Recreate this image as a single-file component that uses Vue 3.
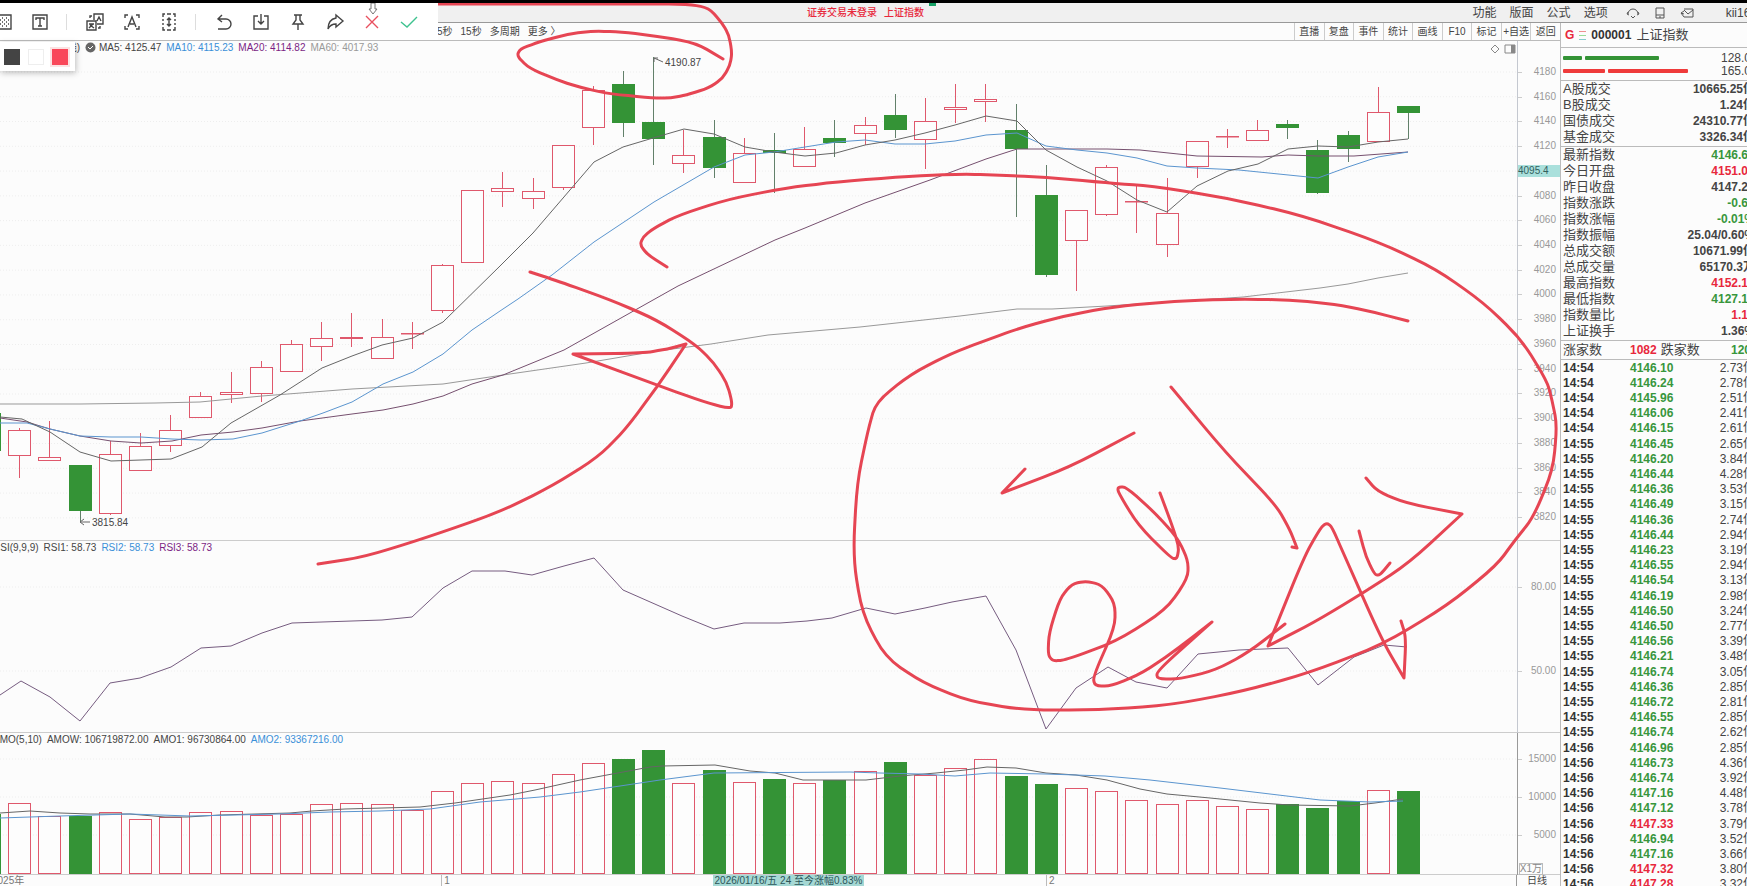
<template>
  <div class="screen">
    <header class="titleBar">
      <p class="notice"><span>证券交易未登录</span><span>上证指数</span><i class="noticeDot"></i></p>
      <nav class="menu">
        <button v-for="item in menu" :key="item">{{ item }}</button>
        <div class="menuIcons">
          <button aria-label="客服">
            <svg width="14" height="14" viewBox="0 0 14 14">
              <path d="M2 8 A5 5 0 1 1 12 8 M2 6 L1 8 L3 9 M12 6 L13 8 L11 9 M5 10 L7 12 L9 10" />
            </svg>
          </button>
          <button aria-label="手机版">
            <svg width="14" height="14" viewBox="0 0 14 14">
              <path d="M3 2 H11 V12 H3 Z M3 9 H11 M6 11 H8" />
            </svg>
          </button>
          <button aria-label="消息">
            <svg width="14" height="14" viewBox="0 0 14 14">
              <path d="M4 3 H13 V11 H4 L1 7 M4 4 L8 8 L13 4 M4 8 L1 7 L4 5" />
            </svg>
          </button>
        </div>
        <span class="user">kii163</span>
      </nav>
    </header>

    <div class="body">
      <main class="chart">
        <div class="periodBar">
          <div class="periods">
            <button v-for="item in periods" :key="item">{{ item }}</button>
          </div>
          <div class="actions">
            <button v-for="item in actions" :key="item">{{ item }}</button>
          </div>
        </div>

        <section class="panel pricePanel">
          <div class="plot">
            <p class="legend">
              <span class="legendHead">日线)</span>
              <svg class="check" width="11" height="11" viewBox="0 0 11 11">
                <circle cx="5.5" cy="5.5" r="5" fill="#666" />
                <path d="M3 5 L5 7 L8 4" fill="none" stroke="#fff" />
              </svg>
              <span>MA5: 4125.47</span>
              <span class="blue">MA10: 4115.23</span>
              <span class="purple">MA20: 4114.82</span>
              <span class="grey">MA60: 4017.93</span>
            </p>
            <svg class="corner" width="26" height="12" viewBox="0 0 26 12">
              <path d="M5 2 L9 6 L5 10 L1 6 Z M15 2 H25 V10 H15 Z" fill="none" stroke="#888" />
              <path d="M21 2 H25 V10 H21 Z" fill="#888" />
            </svg>
            <svg class="canvas" viewBox="0 41 1517 500" preserveAspectRatio="none">
              <line v-for="n in 19" :key="n" class="gridLine" x1="0" x2="1517" :y1="gridY(n)" :y2="gridY(n)" />
              <g v-for="(c, i) in candles" :key="i" :class="c[4] ? 'down' : 'up'">
                <line :x1="barX(i)" :x2="barX(i)" :y1="c[0]" :y2="c[1]" />
                <line :x1="barX(i)" :x2="barX(i)" :y1="c[2]" :y2="c[3]" />
                <rect :x="barX(i) - 11" :y="c[1] + 0.5" width="22" :height="Math.max(c[2] - c[1], 0.5)" />
              </g>
              <polyline class="line greyLine" :points="ma60" />
              <polyline class="line purpleLine" :points="ma20" />
              <polyline class="line blueLine" :points="ma10" />
              <polyline class="line darkLine" :points="ma5" />
              <path class="line darkLine" d="M654 62 V58 H658 M654 58 L663 62 M90 522 H80 M84 519 L80 522 L84 525" />
              <text x="665" y="66">4190.87</text>
              <text x="92" y="526">3815.84</text>
            </svg>
          </div>
          <ol class="axis priceAxis">
            <li v-for="p in prices" :key="p" :class="{ current: p === '4095.4' }">{{ p }}</li>
          </ol>
        </section>

        <section class="panel">
          <div class="plot">
            <p class="legend cutLeft">
              <span>RSI(9,9,9)</span>
              <span>RSI1: 58.73</span>
              <span class="blue">RSI2: 58.73</span>
              <span class="purple">RSI3: 58.73</span>
            </p>
            <svg class="canvas" viewBox="0 541 1517 192" preserveAspectRatio="none">
              <line class="gridLine" x1="0" x2="1517" y1="587" y2="587" />
              <line class="gridLine" x1="0" x2="1517" y1="671" y2="671" />
              <polyline class="line rsiLine" :points="rsi" />
            </svg>
          </div>
          <ol class="axis rsiAxis">
            <li>80.00</li>
            <li>50.00</li>
          </ol>
        </section>

        <section class="panel">
          <div class="plot">
            <p class="legend cutLeft">
              <span>AMO(5,10)</span>
              <span>AMOW: 106719872.00</span>
              <span>AMO1: 96730864.00</span>
              <span class="blue">AMO2: 93367216.00</span>
            </p>
            <svg class="canvas" viewBox="0 733 1517 142" preserveAspectRatio="none">
              <line v-for="y in [759, 797, 835]" :key="y" class="gridLine" x1="0" x2="1517" :y1="y" :y2="y" />
              <g v-for="(y, i) in amounts" :key="i" :class="candles[i][4] ? 'down' : 'up'">
                <rect :x="barX(i) - 11" :y="y + 0.5" width="22" :height="873 - y" />
              </g>
              <polyline class="line darkLine" :points="amo1" />
              <polyline class="line blueLine" :points="amo2" />
            </svg>
          </div>
          <ol class="axis amoAxis">
            <li>15000</li>
            <li>10000</li>
            <li>5000</li>
          </ol>
          <span class="unit">X1万</span>
        </section>

        <footer class="dates">
          <div class="dateTrack">
            <span class="year">2025年</span>
            <span v-for="m in months" :key="m.label" class="month" :style="{ left: m.left }">{{ m.label }}</span>
            <span class="dateTag">2026/01/16/五 24 至今涨幅0.83%</span>
          </div>
          <span class="cycle">日线</span>
        </footer>
      </main>

      <aside class="quote">
        <h1 class="stock">
          <b class="mark">G</b>
          <i class="stack"></i>
          <b>000001</b>
          <span>上证指数</span>
        </h1>
        <div class="strength">
          <div class="strengthRow sell"><i class="short"></i><i class="long"></i><span>128.0</span></div>
          <div class="strengthRow buy"><i class="short"></i><i class="long"></i><span>165.0</span></div>
        </div>
        <table v-for="(group, g) in quotes" :key="g" class="quoteTable">
          <tbody>
            <tr v-for="row in group" :key="row[0]">
              <th scope="row">{{ row[0] }}</th>
              <td :class="[row[2], { cut: row[3] }]">{{ row[1] }}</td>
            </tr>
          </tbody>
        </table>
        <p class="counts">
          <span>涨家数</span><b class="red">1082</b><span>跌家数</span><b class="green last">120</b>
        </p>
        <table class="ticks">
          <tbody>
            <tr v-for="(t, i) in ticks" :key="i">
              <td>{{ t[0] }}</td>
              <td :class="t[3] ? 'red' : 'green'">{{ t[1] }}</td>
              <td class="amount">{{ t[2] }}亿</td>
            </tr>
          </tbody>
        </table>
      </aside>
    </div>

    <svg class="ink" viewBox="0 0 1747 886" preserveAspectRatio="none">
      <path v-for="(s, i) in strokes" :key="i" :d="smooth(s)" />
    </svg>

    <div class="snipBar">
      <template v-for="(tool, i) in tools" :key="i">
        <i v-if="tool.sep" class="sep"></i>
        <button v-else :aria-label="tool.name" :class="tool.color">
          <svg width="20" height="20" viewBox="0 0 20 20">
            <path :d="tool.d" />
          </svg>
        </button>
      </template>
    </div>
    <div class="swatches">
      <button class="dark" aria-label="黑色"></button>
      <button class="white" aria-label="白色"></button>
      <button class="picked" aria-label="红色"></button>
    </div>
    <svg class="pointer" width="10" height="13" viewBox="0 0 10 13">
      <path d="M3 1 H7 V7 H9 L5 12 L1 7 H3 Z" />
    </svg>
  </div>
</template>

<script setup>
const menu = ["功能", "版面", "公式", "选项"];
const periods = ["5秒", "15秒", "多周期", "更多 〉"];
const actions = ["直播", "复盘", "事件", "统计", "画线", "F10", "标记", "+自选", "返回"];

const prices = [
  "4180", "4160", "4140", "4120", "4095.4", "4080", "4060", "4040", "4020", "4000",
  "3980", "3960", "3940", "3920", "3900", "3880", "3860", "3840", "3820",
];

const months = [
  { label: "1", left: "29.1%" },
  { label: "2", left: "69%" },
];

const tools = [
  { name: "马赛克", d: "M2 3 H18 V17 H2 Z M5 6 h1 M9 6 h1 M13 6 h1 M7 8 h1 M11 8 h1 M15 8 h1 M5 10 h1 M9 10 h1 M13 10 h1 M7 12 h1 M11 12 h1 M15 12 h1 M5 14 h1 M9 14 h1 M13 14 h1" },
  { name: "文字", d: "M3 3 H17 V17 H3 Z M6 8 V6 H14 V8 M10 6 V14 M8 14 H12" },
  { sep: true },
  { name: "翻译", d: "M9 8 V2 H18 V12 H12 M2 9 H11 V18 H2 Z M4 12 H9 M8 12 L4 16 M5 13 L9 16 M12 9 L14 5 L16 9 M5 6 V4 H7 M15 14 V16 H13" },
  { name: "识别文字", d: "M3 6 V3 H6 M14 3 H17 V6 M17 14 V17 H14 M6 17 H3 V14 M6 15 L10 5 L14 15 M8 12 H12" },
  { name: "长截图", d: "M4 5 V2 H6 M8 2 H12 M14 2 H16 V5 M4 7 V9 M4 11 V13 M16 7 V9 M16 11 V13 M4 15 V18 H6 M8 18 H12 M14 18 H16 V15 M10 6 V14 M8 8 L10 6 L12 8 M8 12 L10 14 L12 12" },
  { sep: true },
  { name: "撤销", d: "M8 3 L4 7 L8 10 M4 7 H12 A5 5 0 0 1 12 17 H4" },
  { name: "保存", d: "M7 4 H3 V17 H17 V4 H13 M10 2 V12 M7 9 L10 12 L13 9" },
  { name: "钉住", d: "M6 3 H14 M8 3 V8 L5 12 H15 L12 8 V3 M10 12 V18" },
  { name: "分享", d: "M11 3 L18 9 L11 15 V12 C7 12 5 13 3 17 C3 10 6 7 11 6 Z" },
  { name: "取消", color: "cancel", d: "M4 4 L16 16 M16 4 L4 16" },
  { name: "完成", color: "done", d: "M2 10 L8 15 L18 5" },
];

// high, body top, body bottom, low, falling
const candles = [
  [412, 413, 450, 450, 1],
  [428, 430, 455, 478],
  [421, 457, 460, 460],
  [465, 465, 510, 522, 1],
  [441, 454, 513, 515],
  [433, 446, 470, 470],
  [415, 430, 445, 452],
  [392, 396, 417, 417],
  [372, 392, 394, 403],
  [361, 367, 393, 402],
  [340, 344, 371, 371],
  [322, 338, 346, 361],
  [313, 337, 338, 347],
  [319, 337, 358, 358],
  [322, 333, 333, 349],
  [264, 265, 310, 313],
  [190, 190, 262, 262],
  [172, 188, 191, 207],
  [178, 191, 198, 209],
  [145, 145, 187, 190],
  [86, 90, 127, 145],
  [71, 84, 122, 137, 1],
  [57, 122, 138, 165, 1],
  [130, 155, 163, 173],
  [120, 137, 167, 178, 1],
  [138, 153, 182, 182],
  [133, 150, 152, 193, 1],
  [127, 149, 166, 166],
  [120, 138, 142, 157, 1],
  [117, 125, 133, 145],
  [94, 115, 129, 138, 1],
  [98, 121, 139, 169],
  [84, 107, 109, 123],
  [84, 99, 101, 122],
  [104, 130, 148, 217, 1],
  [165, 195, 274, 277, 1],
  [210, 210, 240, 291],
  [165, 167, 214, 216],
  [186, 201, 201, 233],
  [178, 213, 244, 257],
  [141, 141, 166, 178],
  [129, 136, 136, 148],
  [120, 130, 140, 140],
  [120, 124, 127, 139, 1],
  [140, 150, 192, 194, 1],
  [131, 135, 148, 162, 1],
  [87, 112, 141, 141],
  [106, 106, 112, 139, 1],
];

const amounts = [
  814, 803, 816, 816, 812, 819, 817, 812, 811, 815, 814, 804, 803, 804, 810, 791,
  783, 781, 783, 774, 763, 759, 750, 783, 770, 782, 779, 783, 780, 771, 762, 775,
  768, 759, 776, 784, 788, 791, 800, 804, 800, 806, 809, 804, 808, 801, 790, 791,
];

const barX = (i) => Math.round(20.3 + (i - 1) * 30.19) - 0.5;
const gridY = (n) => 72 + (n - 1) * 24.77;

const ma5 =
  "0,417 22,419 50,432 80,452 111,461 171,459 202,447 231,423 280,395 322,368 352,356 382,345 413,338 443,322 500,266 533,233 594,162 623,147 653,138 684,129 714,134 745,147 774,152 805,156 836,153 865,145 895,140 925,133 955,125 986,116 1017,121 1046,150 1077,167 1107,181 1137,200 1167,212 1197,186 1228,171 1258,164 1288,149 1318,146 1348,147 1378,142 1408,139";
const ma10 =
  "0,423 27,423 50,429 80,436 111,437 141,437 172,439 201,440 233,439 262,433 300,421 323,413 352,402 383,384 413,372 443,354 472,330 500,311 518,299 552,275 594,242 654,202 714,167 745,155 774,152 805,147 836,142 865,140 895,144 925,144 955,141 986,135 1017,133 1046,146 1077,150 1107,153 1137,158 1167,166 1197,168 1239,170 1318,178 1348,167 1378,157 1408,152";
const ma20 =
  "0,418 27,422 50,429 80,436 111,441 141,443 172,441 201,435 233,432 262,428 300,421 352,414 383,410 413,404 443,396 472,384 503,375 564,350 678,286 775,240 805,228 865,203 930,180 986,159 1017,149 1107,149 1140,150 1197,156 1262,157 1288,155 1318,156 1354,156 1408,152";
const ma60 =
  "0,404 80,404 155,403 200,402 262,396 352,389 443,384 503,375 586,363 657,351 711,344 768,335 860,327 960,316 1017,309 1052,309 1107,306 1167,302 1243,297 1320,288 1348,284 1378,278 1408,273";
const rsi =
  "0,695 21,681 50,697 80,721 110,683 140,678 171,667 201,648 231,646 262,633 292,623 352,621 382,620 412,617 443,588 472,571 505,571 532,575 564,566 594,558 623,590 682,616 714,629 744,623 780,623 807,621 832,618 866,608 895,614 925,608 952,602 986,596 1016,650 1046,729 1076,688 1108,667 1136,682 1167,688 1198,654 1239,650 1288,648 1318,685 1354,657 1384,645 1407,647";
const amo1 =
  "0,813 30,811 60,813 90,814 130,814 165,817 187,817 220,815 290,813 312,811 345,809 420,807 455,803 510,795 535,790 580,780 650,767 662,766 715,765 750,771 775,773 803,780 866,780 900,776 936,773 965,770 987,767 1016,768 1046,773 1076,775 1107,780 1140,789 1167,794 1210,798 1260,803 1290,805 1350,806 1375,803 1403,799";
const amo2 =
  "0,818 60,816 130,814 190,816 280,814 330,812 380,811 430,809 480,802 540,797 580,792 660,780 714,773 850,772 880,773 920,774 955,776 990,773 1046,774 1105,776 1150,780 1220,788 1270,794 1320,800 1370,802 1403,801";

// label, value, color, last digit runs past the window edge
const quotes = [
  [
    ["A股成交", "10665.25亿"],
    ["B股成交", "1.24亿"],
    ["国债成交", "24310.77亿"],
    ["基金成交", "3326.34亿"],
  ],
  [
    ["最新指数", "4146.6", "green", true],
    ["今日开盘", "4151.0", "red", true],
    ["昨日收盘", "4147.2", "", true],
    ["指数涨跌", "-0.6", "green", true],
    ["指数涨幅", "-0.01%", "green"],
    ["指数振幅", "25.04/0.60%"],
    ["总成交额", "10671.99亿"],
    ["总成交量", "65170.3万"],
    ["最高指数", "4152.1", "red", true],
    ["最低指数", "4127.1", "green", true],
    ["指数量比", "1.1", "red", true],
    ["上证换手", "1.36%"],
  ],
];

const ticks = [
  ["14:54", "4146.10", "2.73"],
  ["14:54", "4146.24", "2.78"],
  ["14:54", "4145.96", "2.51"],
  ["14:54", "4146.06", "2.41"],
  ["14:54", "4146.15", "2.61"],
  ["14:55", "4146.45", "2.65"],
  ["14:55", "4146.20", "3.84"],
  ["14:55", "4146.44", "4.28"],
  ["14:55", "4146.36", "3.53"],
  ["14:55", "4146.49", "3.15"],
  ["14:55", "4146.36", "2.74"],
  ["14:55", "4146.44", "2.94"],
  ["14:55", "4146.23", "3.19"],
  ["14:55", "4146.55", "2.94"],
  ["14:55", "4146.54", "3.13"],
  ["14:55", "4146.19", "2.98"],
  ["14:55", "4146.50", "3.24"],
  ["14:55", "4146.50", "2.77"],
  ["14:55", "4146.56", "3.39"],
  ["14:55", "4146.21", "3.48"],
  ["14:55", "4146.74", "3.05"],
  ["14:55", "4146.36", "2.85"],
  ["14:55", "4146.72", "2.81"],
  ["14:55", "4146.55", "2.85"],
  ["14:55", "4146.74", "2.62"],
  ["14:56", "4146.96", "2.85"],
  ["14:56", "4146.73", "4.36"],
  ["14:56", "4146.74", "3.92"],
  ["14:56", "4147.16", "4.48"],
  ["14:56", "4147.12", "3.78"],
  ["14:56", "4147.33", "3.79", true],
  ["14:56", "4146.94", "3.52"],
  ["14:56", "4147.16", "3.66"],
  ["14:56", "4147.32", "3.80", true],
  ["14:56", "4147.28", "3.32", true],
];

const strokes = [
  "438,4 640,4 688,4 709,8 722,23 729,35 732,53 730,65 723,78 709,88 686,95 671,98 654,98 611,94 582,88 557,80 529,68 517,56 520,49 539,42 568,34 593,31 621,32 657,36 696,43 723,59",
  "667,267 648,255 640,245 643,237 654,228 679,215 729,199 786,188 836,182 911,176 964,174 991,175 1046,177 1107,183 1151,186 1228,198 1304,216 1381,243 1436,269 1484,303 1521,339 1547,381 1552,400 1557,425 1553,470 1533,518 1515,540 1497,565 1448,605 1382,645 1308,673 1244,691 1171,705 1099,710 1024,710 969,701 923,683 885,657 862,613 853,557 857,483 868,430 876,402 911,374 952,353 987,340 1017,329 1063,316 1113,307 1174,301 1239,299 1289,300 1335,304 1373,312 1408,321",
  "530,272 552,279 611,300 657,320 696,345 714,363 727,383 732,402 731,409 704,402 657,385 573,354 643,353 668,349 686,344 657,387 625,430 598,457 554,485 500,512 425,538 364,557 318,564",
  "1134,433 1070,467 1002,493 1025,469",
  "1171,387 1226,453 1276,505 1290,530 1297,548 1292,547",
  "1160,493 1172,525 1179,547 1177,559 1171,558 1138,525 1118,492 1118,487 1126,487 1152,510 1177,537 1188,560 1188,578 1166,610 1115,642 1065,660 1053,661 1048,655 1049,633 1060,598 1072,584 1086,581 1102,585 1115,603 1115,627 1093,677 1095,686 1111,686 1143,673 1180,647 1212,622 1157,671 1157,679 1180,679 1216,670 1249,652 1285,624",
  "1366,478 1377,491 1405,503 1462,514 1409,563 1363,593 1313,623 1268,646 1304,557 1321,527 1327,523 1332,527 1345,557 1382,640 1404,678 1406,637 1401,621",
  "1359,531 1366,557 1375,575 1380,575 1390,563",
];

// point on the way from a to b
const between = (a, b, t) => [a[0] + (b[0] - a[0]) * t, a[1] + (b[1] - a[1]) * t];

// round the joints of a hand-drawn stroke, but leave hard turns sharp
function smooth(text) {
  const p = text.split(" ").map((s) => s.split(",").map(Number));
  let d = `M${p[0]}`;
  for (let i = 1; i < p.length - 1; i++) {
    const [a, b, c] = [p[i - 1], p[i], p[i + 1]];
    const u = [b[0] - a[0], b[1] - a[1]];
    const v = [c[0] - b[0], c[1] - b[1]];
    const cos = (u[0] * v[0] + u[1] * v[1]) / (Math.hypot(...u) * Math.hypot(...v));
    if (cos < -0.2) {
      d += `L${b}`;
    } else {
      d += `L${between(b, a, 0.4)}Q${b} ${between(b, c, 0.4)}`;
    }
  }
  return d + `L${p[p.length - 1]}`;
}
</script>

<style>
body {
  margin: 0;
  background: #fcfcfc;
}
</style>

<style scoped>
.screen {
  position: relative;
  display: flex;
  flex-direction: column;
  height: 100vh;
  box-sizing: border-box;
  overflow: hidden;
  border-top: 3px solid #000;
  background: #fcfcfc;
  color: #444;
  font-family: "Liberation Sans", "Noto Sans CJK SC", sans-serif;
  font-size: 10px;
  line-height: 12px;
}

button {
  padding: 0;
  border: 0;
  background: none;
  color: inherit;
  font: inherit;
  white-space: nowrap;
}

p,
h1,
ol {
  margin: 0;
  padding: 0;
}

.red {
  color: #e8283c;
}

.green {
  color: #38963c;
}

.blue {
  color: #3a8fd8;
}

.purple {
  color: #7b1f84;
}

.grey {
  color: #999;
}

/* title bar */
.titleBar {
  display: grid;
  grid-template-columns: 1fr auto 1fr;
  align-items: center;
  height: 19px;
  flex-shrink: 0;
  background: #f0f0f0;
}

.notice {
  grid-column: 2;
  position: relative;
  display: flex;
  gap: 7px;
  padding-right: 16px;
  color: #e8283c;
  font-weight: 500;
}

.noticeDot {
  position: absolute;
  top: -4px;
  right: 4px;
  width: 7px;
  height: 3px;
  background: #16a065;
}

.menu {
  display: flex;
  justify-content: flex-end;
  align-items: center;
  gap: 13px;
  margin-right: -10px;
  font-size: 12px;
}

.menuIcons {
  display: flex;
  gap: 13px;
  padding: 0 19px 0 5px;
}

.menuIcons button {
  display: flex;
}

.menuIcons svg {
  fill: none;
  stroke: #555;
}

.body {
  flex: 1;
  display: grid;
  grid-template-columns: minmax(0, 1fr) 187px;
  min-height: 0;
  border-top: 1px solid #999;
}

/* chart */
.chart {
  display: grid;
  grid-template-rows: 18px minmax(0, 500fr) minmax(0, 192fr) minmax(0, 142fr) 11px;
  min-height: 0;
}

.periodBar {
  display: flex;
  justify-content: space-between;
  border-bottom: 1px solid #bbb;
  padding-left: 437px;
}

.periods {
  display: flex;
  align-items: center;
  gap: 8px;
}

.actions {
  display: grid;
  grid-template-columns: repeat(9, minmax(0, 1fr));
  width: 266px;
}

.actions button {
  border-left: 1px solid #ccc;
}

.panel {
  position: relative;
  display: grid;
  grid-template-columns: minmax(0, 1fr) 43px;
  min-height: 0;
  box-shadow: inset 0 -1px #ccc;
}

.plot {
  position: relative;
  min-height: 0;
}

.canvas {
  display: block;
  width: 100%;
  height: 100%;
}

.canvas text {
  fill: #444;
}

.legend {
  position: absolute;
  top: 1px;
  left: 0;
  display: flex;
  gap: 5px;
  white-space: nowrap;
}

.cutLeft {
  left: -7px;
}

.legendHead {
  width: 80px;
  text-align: right;
}

.check {
  margin-right: -2px;
}

.corner {
  position: absolute;
  top: 2px;
  right: 1px;
}

.gridLine {
  stroke: #eee;
  stroke-dasharray: 1 2;
}

.line {
  fill: none;
}

.darkLine {
  stroke: #666;
}

.blueLine {
  stroke: #5b95cf;
}

.purpleLine {
  stroke: #76506f;
}

.greyLine {
  stroke: #999;
}

.rsiLine {
  stroke: #765c80;
}

.up line,
.up rect {
  fill: #fdfdfd;
  stroke: #df586c;
}

.down line {
  stroke: #62806a;
}

.down rect {
  fill: #349336;
  stroke: #349336;
}

.axis {
  display: flex;
  flex-direction: column;
  justify-content: space-between;
  border-left: 1px solid #c4c8d0;
  color: #999;
  text-align: right;
  list-style: none;
}

.axis li {
  position: relative;
  padding-right: 4px;
}

.axis li::before {
  content: "";
  position: absolute;
  left: 0;
  top: 6px;
  width: 4px;
  border-top: 1px solid #ccc;
}

.priceAxis {
  padding: 25px 0 18px;
}

.rsiAxis {
  padding: 40px 0 56px;
}

.amoAxis {
  padding: 20px 0 34px;
  border-color: #999;
}

.axis .current {
  background: #aae0dc;
  color: #33605e;
  text-align: left;
}

.axis .current::before {
  display: none;
}

.unit {
  position: absolute;
  right: 17px;
  bottom: 0;
  border: 1px solid #bbb;
  color: #888;
  line-height: 10px;
}

.dates {
  display: grid;
  grid-template-columns: minmax(0, 1fr) 43px;
  overflow: hidden;
  color: #777;
}

.dateTrack {
  position: relative;
  border-right: 1px solid #999;
}

.year {
  margin-left: -8px;
}

.month {
  position: absolute;
  top: 0;
  padding-left: 2px;
  border-left: 1px solid #bbb;
}

.dateTag {
  position: absolute;
  top: 0;
  left: 47%;
  padding: 0 2px;
  background: #a5d8d4;
  color: #2c5558;
  white-space: nowrap;
}

.cycle {
  padding-left: 10px;
  color: #444;
}

/* quote column */
.quote {
  min-height: 0;
  overflow: hidden;
  border-left: 1px solid #bbb;
  box-sizing: border-box;
  font-size: 12px;
}

.stock {
  display: flex;
  align-items: center;
  gap: 5px;
  height: 24px;
  padding-left: 4px;
  border-bottom: 1px solid #bbb;
  font-size: 12px;
  font-weight: 400;
}

.stock span {
  font-size: 13px;
}

.stock b {
  color: #333;
}

.stock .mark {
  color: #e8283c;
}

.stack {
  width: 7px;
  height: 7px;
  border-top: 1px solid #f09090;
  border-bottom: 1px solid #8cc;
  background: linear-gradient(#fcfcfc 3px, #9d9 3px, #9d9 4px, #fcfcfc 4px);
}

.strength {
  padding: 3px 0;
  border-bottom: 1px solid #bbb;
}

.strengthRow {
  display: flex;
  align-items: center;
  gap: 3px;
  height: 13px;
  padding-left: 2px;
}

.strengthRow i {
  height: 4px;
  border-radius: 1px;
}

.strengthRow span {
  margin-left: auto;
  margin-right: -4px;
}

.sell i {
  background: #349336;
}

.buy i {
  background: #ef3b3b;
}

.sell .short {
  width: 19px;
}

.sell .long {
  width: 74px;
}

.buy .short {
  width: 42px;
}

.buy .long {
  width: 80px;
}

.quoteTable,
.ticks {
  width: calc(100% + 8px);
  border-collapse: collapse;
}

.quoteTable {
  border-bottom: 1px solid #bbb;
}

.quoteTable tr:last-child > * {
  padding-bottom: 1px;
}

.quoteTable th {
  padding: 0 0 0 2px;
  font-size: 13px;
  font-weight: 400;
  line-height: 16px;
  text-align: left;
}

.quoteTable td {
  padding: 0;
  font-weight: 700;
  line-height: 16px;
  text-align: right;
}

.quoteTable .cut {
  padding-right: 7px;
}

.counts {
  display: flex;
  align-items: center;
  gap: 4px;
  height: 18px;
  padding-left: 2px;
  border-bottom: 1px solid #bbb;
  font-size: 13px;
}

.counts b {
  font-size: 12px;
}

.counts .red {
  margin-left: 24px;
}

.counts .last {
  margin-left: auto;
  margin-right: -4px;
}

.ticks td {
  padding: 0;
  font-weight: 700;
  line-height: 15px;
}

.ticks tr:nth-child(5n + 1) td {
  line-height: 16px;
}

.ticks td:first-child {
  width: 67px;
  padding-left: 2px;
  color: #333;
}

.ticks .amount {
  text-align: right;
  font-weight: 400;
}

/* screenshot tool drawn over the page */
.ink {
  position: absolute;
  top: -3px;
  left: 0;
  width: 100%;
  height: 100vh;
  pointer-events: none;
}

.ink path {
  fill: none;
  stroke: #e64553;
  stroke-width: 3;
  stroke-linecap: round;
  stroke-linejoin: round;
}

.snipBar {
  position: absolute;
  top: 0;
  left: 0;
  display: flex;
  align-items: center;
  height: 37px;
  margin-left: -16px;
  padding-right: 11px;
  background: #fff;
}

.snipBar button {
  display: flex;
  justify-content: center;
  width: 37px;
}

.snipBar svg {
  fill: none;
  stroke: #444;
  stroke-width: 1.4;
}

.snipBar .cancel svg {
  stroke: #e8505f;
}

.snipBar .done svg {
  stroke: #3ec28f;
}

.sep {
  width: 1px;
  height: 16px;
  margin: 0 9px 0 8px;
  background: #ddd;
}

.swatches {
  position: absolute;
  top: 39px;
  left: 0;
  display: flex;
  gap: 8px;
  padding: 7px 7px 6px 4px;
  background: #fff;
  box-shadow: 1px 2px 6px rgba(0, 0, 0, 0.25);
}

.swatches button {
  width: 16px;
  height: 16px;
}

.swatches .dark {
  background: #444;
}

.swatches .white {
  background: #fff;
  border: 1px solid #eee;
}

.swatches .picked {
  background: #f9485a;
  box-shadow: 0 0 0 2px #fbe3e3;
}

.pointer {
  position: absolute;
  top: -1px;
  left: 368px;
  fill: #fff;
  stroke: #777;
}
</style>
